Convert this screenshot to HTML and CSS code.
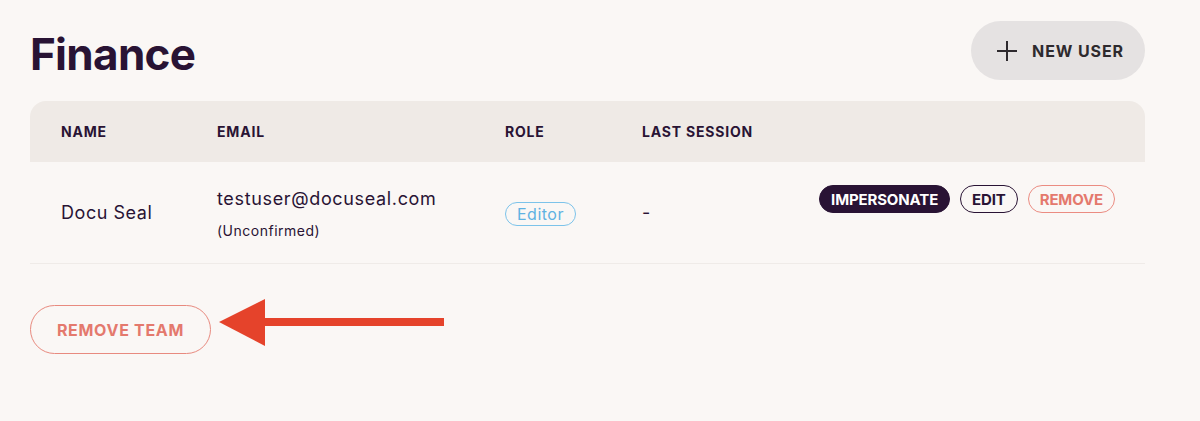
FILE: index.html
```html
<!DOCTYPE html>
<html>
<head>
<meta charset="utf-8">
<link rel="stylesheet" href="styles.css">
</head>
<body>
<main class="page">
  <div class="top">
    <h1 class="title">Finance</h1>
    <button class="btn-new">
      <svg class="plus" width="22" height="22" viewBox="0 0 22 22"><path d="M11 1v20M1 11h20" stroke="#2e2a2e" stroke-width="2" fill="none"/></svg>
      <span>NEW USER</span>
    </button>
  </div>
  <div class="table">
    <div class="row head">
      <div>NAME</div>
      <div>EMAIL</div>
      <div>ROLE</div>
      <div>LAST SESSION</div>
      <div></div>
    </div>
    <div class="row body">
      <div class="name">Docu Seal</div>
      <div class="email">
        <div class="addr">testuser@docuseal.com</div>
        <div class="unconf">(Unconfirmed)</div>
      </div>
      <div><span class="badge">Editor</span></div>
      <div class="session">-</div>
      <div class="actions">
        <button class="act act-dark">IMPERSONATE</button>
        <button class="act act-outline">EDIT</button>
        <button class="act act-red">REMOVE</button>
      </div>
    </div>
  </div>
  <div class="footer">
    <button class="btn-remove-team">REMOVE TEAM</button>
    <svg class="arrow" width="226" height="48" viewBox="0 0 226 48"><polygon points="0,23 46,0 46,47" fill="#e5432b"/><rect x="44" y="19" width="181" height="8" fill="#e5432b"/></svg>
  </div>
</main>
</body>
</html>
```
FILE: styles.css
```css
* { box-sizing: border-box; }
html, body { margin: 0; padding: 0; }
body {
  background: #faf7f5;
  font-family: Inter, "Noto Sans", sans-serif;
  color: #291334;
  width: 1200px;
  height: 421px;
  overflow: hidden;
}
.page {
  padding: 21px 55px 0 30px;
}
.top {
  display: flex;
  align-items: center;
  justify-content: space-between;
  height: 59px;
}
.title {
  margin: 0;
  font-size: 44px;
  font-weight: 700;
  letter-spacing: -0.7px;
  line-height: 1;
  padding-top: 6px;
}
.btn-new {
  display: flex;
  align-items: center;
  gap: 14px;
  height: 59px;
  padding: 0 21px 0 25px;
  border: none;
  border-radius: 30px;
  background: #e5e2e2;
  font-family: inherit;
  font-size: 16px;
  font-weight: 700;
  color: #2e2a2e;
  letter-spacing: 0.9px;
}
.plus { display: block; }
.table {
  margin-top: 21px;
}
.row {
  display: grid;
  grid-template-columns: 156px 288px 137px 1fr auto;
  align-items: center;
  padding: 0 30px 0 31px;
}
.head {
  background: #efeae6;
  border-radius: 16px 16px 0 0;
  height: 61px;
  font-size: 14px;
  font-weight: 700;
  letter-spacing: 0.8px;
}
.body {
  height: 102px;
  border-bottom: 1px solid #efebe8;
  font-size: 18px;
  letter-spacing: 0.55px;
}
.addr { font-size: 18px; line-height: 22px; margin-top: 3px; letter-spacing: 0.65px; }
.unconf { font-size: 14px; line-height: 18px; margin-top: 12px; letter-spacing: 0.5px; }
.badge {
  display: inline-block;
  border: 1px solid #7cc3ea;
  color: #5fb2e2;
  border-radius: 12px;
  font-size: 16px;
  line-height: 22px;
  padding: 0 11px;
  margin-top: 3px;
  letter-spacing: 0.5px;
}
.session { font-size: 18px; }
.actions {
  display: flex;
  gap: 10px;
  align-self: start;
  margin-top: 23px;
}
.act {
  height: 28px;
  border-radius: 14px;
  font-family: inherit;
  font-size: 15px;
  font-weight: 700;
  padding: 0 11px;
  letter-spacing: -0.15px;
  background: transparent;
}
.act-dark {
  background: #291334;
  color: #fff;
  border: 1px solid #291334;
}
.act-outline {
  border: 1px solid #291334;
  color: #291334;
}
.act-red {
  border: 1px solid #eb8c82;
  color: #e4796d;
}
.footer {
  display: flex;
  align-items: flex-start;
  gap: 8px;
  margin-top: 41px;
}
.btn-remove-team {
  height: 49px;
  width: 181px;
  border: 1px solid #e88a7f;
  border-radius: 25px;
  background: transparent;
  color: #e4796d;
  font-family: inherit;
  font-size: 16px;
  font-weight: 700;
  letter-spacing: 0.7px;
}
.arrow {
  display: block;
  margin-top: -6px;
}
```
